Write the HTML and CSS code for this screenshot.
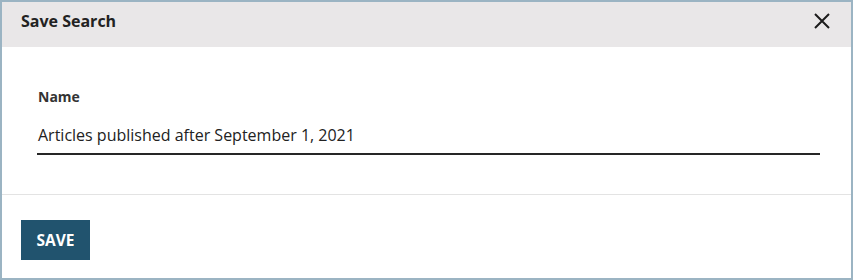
FILE: index.html
```
<!DOCTYPE html>
<html lang="en">
<head>
<meta charset="utf-8">
<title>Save Search</title>
<link rel="stylesheet" href="styles.css">
</head>
<body>
<div class="dialog">
  <div class="dialog-header">
    <h2 class="dialog-title">Save Search</h2>
    <button class="close-btn" aria-label="Close">
      <svg width="16" height="16" viewBox="0 0 16 16"><path d="M1 1 L15 15 M15 1 L1 15" stroke="#1c1c1c" stroke-width="2" fill="none"/></svg>
    </button>
  </div>
  <div class="dialog-body">
    <label class="field-label" for="name">Name</label>
    <div class="field-input" id="name">Articles published after September 1, 2021</div>
  </div>
  <div class="dialog-footer">
    <button class="save-btn">SAVE</button>
  </div>
</div>
</body>
</html>
```
FILE: styles.css
```
html, body {
  margin: 0;
  padding: 0;
  background: #ffffff;
}
body {
  font-family: "Open Sans", "Noto Sans", sans-serif;
  color: #222222;
}
.dialog {
  box-sizing: border-box;
  width: 853px;
  height: 280px;
  border: 2px solid #9bb4c3;
  display: flex;
  flex-direction: column;
  background: #ffffff;
}
.dialog-header {
  box-sizing: border-box;
  height: 45px;
  background: #e9e7e8;
  display: flex;
  align-items: flex-start;
  justify-content: space-between;
  padding: 8px 18px 0 19px;
}
.dialog-title {
  margin: 0;
  font-size: 16px;
  line-height: 22px;
  font-weight: 700;
  color: #222222;
}
.close-btn {
  border: 0;
  background: none;
  padding: 0;
  margin: 3px 3px 0 0;
  width: 16px;
  height: 16px;
  display: block;
}
.close-btn svg {
  display: block;
}
.dialog-body {
  padding: 41px 31px 39px 35px;
  border-bottom: 1px solid #e3e3e3;
  display: flex;
  flex-direction: column;
}
.field-label {
  font-size: 14px;
  line-height: 18px;
  font-weight: 700;
  color: #333333;
  margin-bottom: 18px;
  padding-left: 1px;
}
.field-input {
  font-size: 16px;
  line-height: 22px;
  color: #222222;
  padding: 0 0 7px 1px;
  border-bottom: 2px solid #262626;
}
.dialog-footer {
  padding: 25px 19px 18px;
  display: flex;
}
.save-btn {
  width: 69px;
  height: 40px;
  border: 0;
  background: #21536e;
  color: #ffffff;
  font-family: "Open Sans", "Noto Sans", sans-serif;
  font-size: 15.5px;
  font-weight: 700;
  padding: 0;
  text-align: center;
}
```
